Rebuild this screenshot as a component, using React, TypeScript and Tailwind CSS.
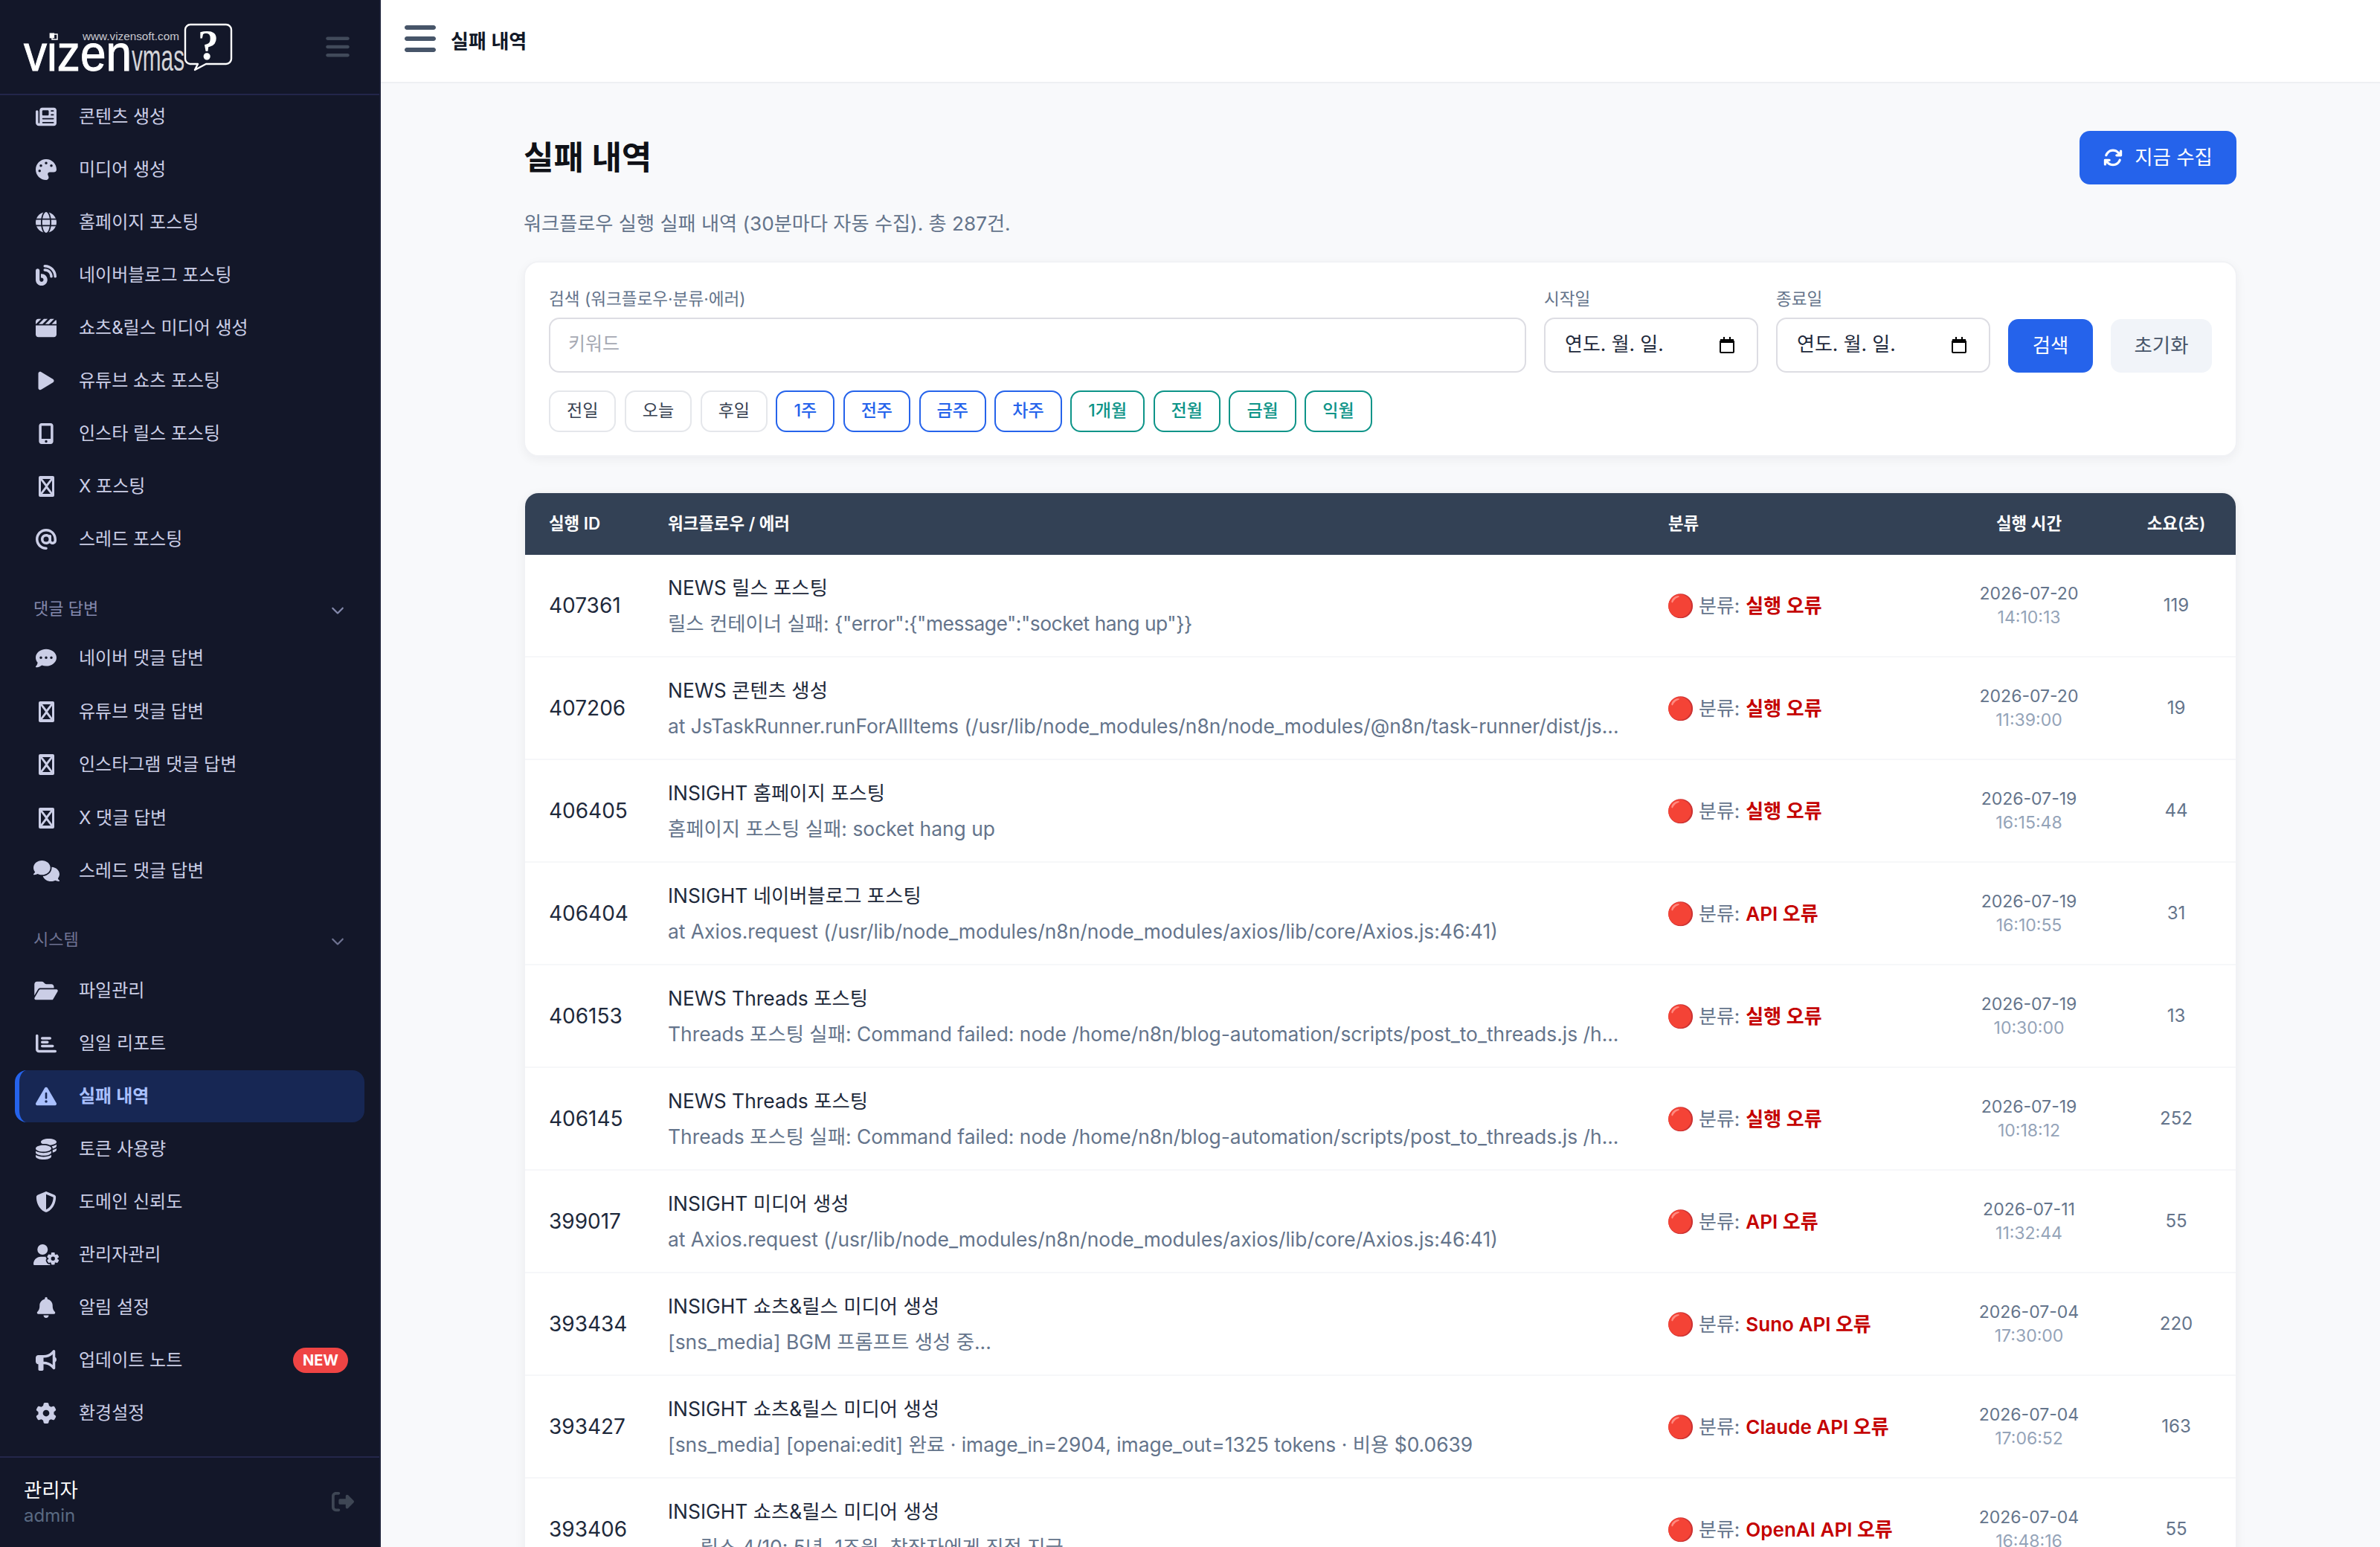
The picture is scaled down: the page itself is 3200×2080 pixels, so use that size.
import React from 'react';
import {
  FaNewspaper, FaPalette, FaGlobe, FaBlog, FaClapperboard, FaPlay, FaMobileScreenButton, FaAt,
  FaCommentDots, FaComments, FaFolderOpen, FaChartBar, FaTriangleExclamation, FaCoins, FaShieldHalved,
  FaUserGear, FaBell, FaBullhorn, FaGear, FaRightFromBracket, FaArrowsRotate, FaBars, FaChevronDown,
} from 'react-icons/fa6';

function MissingGlyph({ className }: { className?: string }) {
  return (
    <svg viewBox="0 0 21 28" className={className} fill="currentColor" width="21" height="28">
      <path
        fillRule="evenodd"
        d="M2 0h17a2 2 0 0 1 2 2v24a2 2 0 0 1-2 2H2a2 2 0 0 1-2-2V2a2 2 0 0 1 2-2zM5 4l5.500 7L16 4H5zM3 6v16l6-8-6-8zm15 0l-6 8 6 8V6zM5 24h11l-5.500-7L5 24z"
      />
    </svg>
  );
}

type Item = { label: string; icon: React.ReactNode; badge?: string; active?: boolean };
const ic = 'w-[28px] h-[28px]';
const top: Item[] = [
  { label: '콘텐츠 생성', icon: <FaNewspaper className={ic} /> },
  { label: '미디어 생성', icon: <FaPalette className={ic} /> },
  { label: '홈페이지 포스팅', icon: <FaGlobe className={ic} /> },
  { label: '네이버블로그 포스팅', icon: <FaBlog className={ic} /> },
  { label: '쇼츠&릴스 미디어 생성', icon: <FaClapperboard className={ic} /> },
  { label: '유튜브 쇼츠 포스팅', icon: <FaPlay className={ic} /> },
  { label: '인스타 릴스 포스팅', icon: <FaMobileScreenButton className={ic} /> },
  { label: 'X 포스팅', icon: <MissingGlyph /> },
  { label: '스레드 포스팅', icon: <FaAt className={ic} /> },
];
const reply: Item[] = [
  { label: '네이버 댓글 답변', icon: <FaCommentDots className={ic} /> },
  { label: '유튜브 댓글 답변', icon: <MissingGlyph /> },
  { label: '인스타그램 댓글 답변', icon: <MissingGlyph /> },
  { label: 'X 댓글 답변', icon: <MissingGlyph /> },
  { label: '스레드 댓글 답변', icon: <FaComments className="w-[35px] h-[28px]" /> },
];
const system: Item[] = [
  { label: '파일관리', icon: <FaFolderOpen className="w-[32px] h-[28px]" /> },
  { label: '일일 리포트', icon: <FaChartBar className={ic} /> },
  { label: '실패 내역', icon: <FaTriangleExclamation className={ic} />, active: true },
  { label: '토큰 사용량', icon: <FaCoins className={ic} /> },
  { label: '도메인 신뢰도', icon: <FaShieldHalved className={ic} /> },
  { label: '관리자관리', icon: <FaUserGear className="w-[35px] h-[28px]" /> },
  { label: '알림 설정', icon: <FaBell className={ic} /> },
  { label: '업데이트 노트', icon: <FaBullhorn className={ic} />, badge: 'NEW' },
  { label: '환경설정', icon: <FaGear className={ic} /> },
];

function NavItem({ item }: { item: Item }) {
  return (
    <div
      className={
        item.active
          ? 'mx-[20px] mb-[1px] flex h-[70px] items-center gap-[24px] rounded-[16px] border-l-[6px] border-[#2563eb] bg-[#172754] pl-[16px] pr-[22px] text-[#a9c0ff]'
          : 'mx-[20px] mb-[1px] flex h-[70px] items-center gap-[24px] rounded-[16px] border-l-[6px] border-transparent pl-[16px] pr-[22px] text-[#cbcee6]'
      }
    >
      <span className="flex w-[40px] shrink-0 items-center justify-center">{item.icon}</span>
      <span className={item.active ? 'flex-1 text-[24px] font-semibold' : 'flex-1 text-[24px]'}>{item.label}</span>
      {item.badge && (
        <span className="flex h-[34px] w-[74px] items-center justify-center rounded-full bg-[#ef4444] text-[20px] font-bold text-white">
          {item.badge}
        </span>
      )}
    </div>
  );
}

function SectionLabel({ label, tone }: { label: string; tone: string }) {
  return (
    <div className={`flex h-[46px] items-center justify-between pl-[45px] pr-[47px] text-[22px] ${tone}`}>
      <span>{label}</span>
      <FaChevronDown className="mt-[4px] h-[18px] w-[18px]" />
    </div>
  );
}

function Logo() {
  return (
    <svg width="320" height="126" viewBox="0 0 320 126" className="shrink-0">
      <text x="32" y="95" fontFamily="'Liberation Sans', sans-serif" fontSize="68" fill="#fff" stroke="#fff" strokeWidth="1" textLength="145" lengthAdjust="spacingAndGlyphs">vizen</text>
      <rect x="70" y="46" width="7" height="7" fill="none" stroke="#fff" strokeWidth="1.5" />
      <text x="111" y="54" fontFamily="'Liberation Sans', sans-serif" fontSize="15" fill="#c9c9cf" textLength="130" lengthAdjust="spacingAndGlyphs">www.vizensoft.com</text>
      <text x="177" y="95" fontFamily="'Liberation Sans', sans-serif" fontSize="50" fill="#d4d4d8" textLength="71" lengthAdjust="spacingAndGlyphs">vmas</text>
      <path d="M256 33h48a7 7 0 0 1 7 7v39a7 7 0 0 1-7 7h-27l-15 8 4-8h-10a7 7 0 0 1-7-7V40a7 7 0 0 1 7-7z" fill="#131729" stroke="#fff" strokeWidth="2.4" strokeLinejoin="round" />
      <text x="280" y="80" textAnchor="middle" fontFamily="'Liberation Serif', serif" fontWeight="700" fontSize="56" fill="#fff">?</text>
    </svg>
  );
}

type Row = [string, string, React.ReactNode, string, string, string, string];
const rows: Row[] = [
  ['407361', 'NEWS 릴스 포스팅', <>릴스 컨테이너 실패: <span className="tracking-[-0.47px]">{'{"error":{"message":"socket hang up"}}'}</span></>, '실행 오류', '2026-07-20', '14:10:13', '119'],
  ['407206', 'NEWS 콘텐츠 생성', 'at JsTaskRunner.runForAllItems (/usr/lib/node_modules/n8n/node_modules/@n8n/task-runner/dist/js...', '실행 오류', '2026-07-20', '11:39:00', '19'],
  ['406405', 'INSIGHT 홈페이지 포스팅', '홈페이지 포스팅 실패: socket hang up', '실행 오류', '2026-07-19', '16:15:48', '44'],
  ['406404', 'INSIGHT 네이버블로그 포스팅', 'at Axios.request (/usr/lib/node_modules/n8n/node_modules/axios/lib/core/Axios.js:46:41)', 'API 오류', '2026-07-19', '16:10:55', '31'],
  ['406153', 'NEWS Threads 포스팅', 'Threads 포스팅 실패: Command failed: node /home/n8n/blog-automation/scripts/post_to_threads.js /h...', '실행 오류', '2026-07-19', '10:30:00', '13'],
  ['406145', 'NEWS Threads 포스팅', 'Threads 포스팅 실패: Command failed: node /home/n8n/blog-automation/scripts/post_to_threads.js /h...', '실행 오류', '2026-07-19', '10:18:12', '252'],
  ['399017', 'INSIGHT 미디어 생성', 'at Axios.request (/usr/lib/node_modules/n8n/node_modules/axios/lib/core/Axios.js:46:41)', 'API 오류', '2026-07-11', '11:32:44', '55'],
  ['393434', 'INSIGHT 쇼츠&릴스 미디어 생성', '[sns_media] BGM 프롬프트 생성 중...', 'Suno API 오류', '2026-07-04', '17:30:00', '220'],
  ['393427', 'INSIGHT 쇼츠&릴스 미디어 생성', '[sns_media] [openai:edit] 완료 · image_in=2904, image_out=1325 tokens · 비용 $0.0639', 'Claude API 오류', '2026-07-04', '17:06:52', '163'],
  ['393406', 'INSIGHT 쇼츠&릴스 미디어 생성', '--- 릴스 4/10: 5년, 1조원, 창작자에게 직접 지급 ---', 'OpenAI API 오류', '2026-07-04', '16:48:16', '55'],
];

const grayChips = ['전일', '오늘', '후일'];
const blueChips = ['1주', '전주', '금주', '차주'];
const tealChips = ['1개월', '전월', '금월', '익월'];
const chip = 'flex h-[56px] items-center rounded-[14px] border-2 bg-white px-[22px] pb-[1px] text-[23px]';
const gridCols = 'grid grid-cols-[160px_1345px_399px_236px_160px]';

function DateBox({ label }: { label: string }) {
  return (
    <div className="w-[288px] shrink-0">
      <div className="mb-[10px] text-[22.6px] leading-[30px] text-[#64748b]">{label}</div>
      <div className="flex h-[74px] items-center justify-between rounded-[14px] border-2 border-[#dddde3] bg-white pl-[26px] pr-[30px] text-[26px] text-[#1e293b]">
        <span className="pb-[4px]">연도. 월. 일.</span>
        <svg width="20" height="22" viewBox="0 0 20 22" fill="none">
          <path d="M1 6h18v14a1 1 0 0 1-1 1H2a1 1 0 0 1-1-1V6z" fill="#fff" stroke="#000" strokeWidth="2" />
          <path d="M1 3h18v5H1zM5 0h2v3H5zM13 0h2v3h-2z" fill="#000" />
        </svg>
      </div>
    </div>
  );
}

export default function App() {
  return (
    <div className="flex h-[2080px] w-[3200px] overflow-hidden bg-[#f8f9fb] font-[Inter,'Noto_Sans_CJK_KR',sans-serif]">
      <aside className="flex h-full w-[512px] shrink-0 flex-col border-r-2 border-[#1d2138] bg-[#131729]">
        <div className="flex h-[128px] shrink-0 items-center justify-between border-b-2 border-[#23264a]">
          <Logo />
          <FaBars className="mr-[40px] h-[36px] w-[32px] text-[#414a5a]" />
        </div>
        <nav className="flex-1 overflow-hidden">
          <div className="-mt-[6px]">
            {top.map((i) => <NavItem key={i.label} item={i} />)}
            <div className="mt-[35px]"><SectionLabel label="댓글 답변" tone="text-[#8489ac]" /></div>
            <div className="mt-[9px] flex flex-col gap-[0.5px]">{reply.map((i) => <NavItem key={i.label} item={i} />)}</div>
            <div className="mt-[33px]"><SectionLabel label="시스템" tone="text-[#6f7392]" /></div>
            <div className="mt-[11px]">{system.map((i) => <NavItem key={i.label} item={i} />)}</div>
          </div>
        </nav>
        <div className="flex h-[122px] shrink-0 items-center justify-between border-t-2 border-[#23264a] pl-[32px] pr-[32px]">
          <div>
            <div className="text-[26.4px] leading-[36px] text-white">관리자</div>
            <div className="text-[24px] leading-[34px] text-[#5a6a82]">admin</div>
          </div>
          <FaRightFromBracket className="mb-[2px] h-[30px] w-[34px] text-[#3e4654]" />
        </div>
      </aside>

      <main className="flex h-full min-w-0 flex-1 flex-col overflow-hidden">
        <header className="flex h-[112px] shrink-0 items-center gap-[20px] border-b-2 border-[#eef0f3] bg-white pl-[32px]">
          <FaBars className="-mt-[6px] h-[48px] w-[42px] text-[#475569]" />
          <span className="text-[26px] font-semibold text-[#111827]">실패 내역</span>
        </header>
        <div className="mx-auto w-[2304px] pt-[64px]">
          <div className="flex items-center justify-between">
            <h1 className="text-[44px] font-bold text-[#0f1117]">실패 내역</h1>
            <button className="mr-[1px] flex h-[72px] w-[211px] items-center justify-center gap-[16px] rounded-[14px] bg-[#2563eb] text-[26.4px] text-white">
              <FaArrowsRotate className="h-[26px] w-[26px]" />
              지금 수집
            </button>
          </div>
          <p className="mt-[33px] text-[26.2px] leading-[40px] text-[#64748b]">워크플로우 실행 실패 내역 (30분마다 자동 수집). 총 287건.</p>

          <section className="mt-[30px] rounded-[20px] border-2 border-[#f1f2f5] bg-white px-[32px] pb-[31px] pt-[34px] shadow-[0_4px_14px_rgba(15,23,42,0.05)]">
            <div className="flex items-end gap-[24px]">
              <div className="min-w-0 flex-1">
                <div className="mb-[10px] text-[22.6px] leading-[30px] text-[#64748b]">검색 (워크플로우·분류·에러)</div>
                <div className="flex h-[74px] items-center rounded-[14px] border-2 border-[#dddde3] bg-white px-[24px] pb-[3px] text-[25px] text-[#a6a9b3]">키워드</div>
              </div>
              <DateBox label="시작일" />
              <DateBox label="종료일" />
              <button className="h-[72px] w-[114px] shrink-0 rounded-[14px] bg-[#2563eb] text-[26.4px] text-white">검색</button>
              <button className="h-[72px] w-[136px] shrink-0 rounded-[14px] bg-[#f1f4f9] text-[26.4px] text-[#475569]">초기화</button>
            </div>
            <div className="mt-[24px] flex gap-[11.5px]">
              {grayChips.map((c) => <span key={c} className={`${chip} border-[#e5e7eb] text-[#374151]`}>{c}</span>)}
              {blueChips.map((c) => <span key={c} className={`${chip} border-[#2563eb] font-medium text-[#2563eb]`}>{c}</span>)}
              {tealChips.map((c) => <span key={c} className={`${chip} border-[#0d9488] font-medium text-[#0d9488]`}>{c}</span>)}
            </div>
          </section>

          <section className="mt-[47px] overflow-hidden rounded-t-[20px] border-x-2 border-t-2 border-[#f1f2f5] bg-white shadow-[0_4px_14px_rgba(15,23,42,0.05)]">
            <div className={`${gridCols} h-[83px] items-center bg-[#334155] text-[22.4px] font-semibold text-white`}>
              <div className="pb-[2px] pl-[32px]">실행 ID</div>
              <div className="pb-[2px] pl-[32px]">워크플로우 / 에러</div>
              <div className="pb-[2px] pl-[32px]">분류</div>
              <div className="pb-[2px] text-center">실행 시간</div>
              <div className="pb-[2px] text-center">소요(초)</div>
            </div>
            {rows.map((r) => (
              <div key={r[0]} className={`${gridCols} h-[138px] items-center border-b-2 border-[#f6f7f9]`}>
                <div className="pl-[32px] text-[28px] text-[#1e293b]">{r[0]}</div>
                <div className="pl-[32px]">
                  <div className="text-[26.4px] leading-[40px] text-[#1e293b]">{r[1]}</div>
                  <div className="mt-[8px] whitespace-nowrap text-[26.4px] leading-[40px] text-[#64748b]">{r[2]}</div>
                </div>
                <div className="flex items-center gap-[8px] pl-[32px] text-[26px]">
                  <span className="mr-[1px] flex w-[32px] items-center justify-center text-[30px] leading-[32px]">🔴</span>
                  <span className="text-[#64748b]">분류:</span>
                  <span className="font-semibold text-[#c40000]">{r[3]}</span>
                </div>
                <div className="text-center text-[23px] leading-[32px]">
                  <div className="text-[#64748b]">{r[4]}</div>
                  <div className="text-[#94a3b8]">{r[5]}</div>
                </div>
                <div className="text-center text-[24px] text-[#64748b]">{r[6]}</div>
              </div>
            ))}
          </section>
        </div>
      </main>
    </div>
  );
}
